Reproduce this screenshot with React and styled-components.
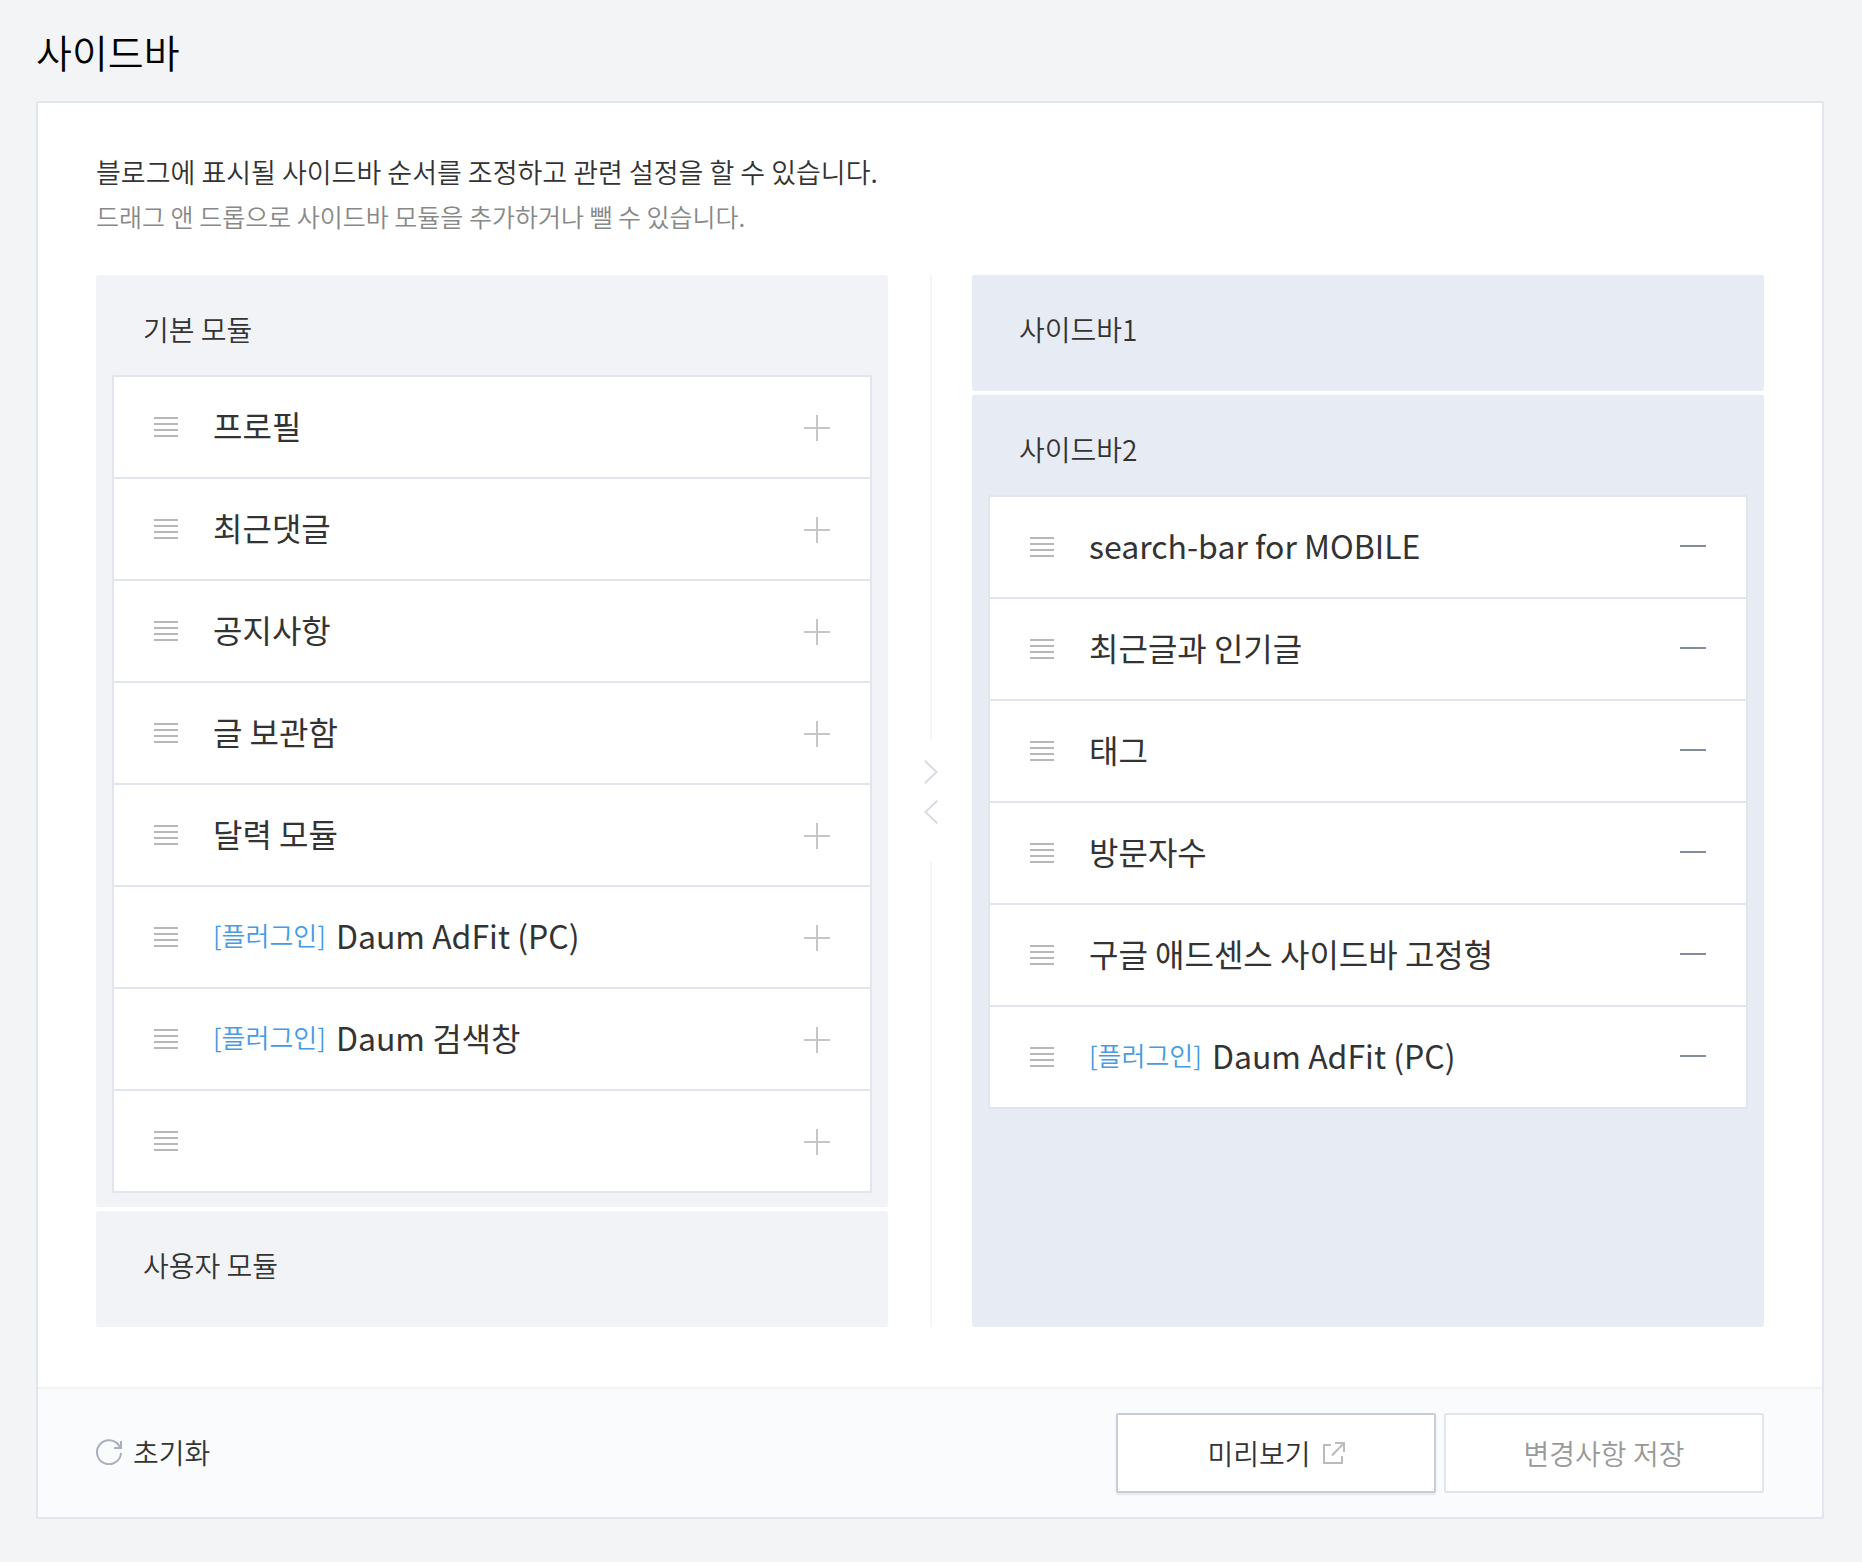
import styled, { createGlobalStyle } from 'styled-components';

const GlobalStyle = createGlobalStyle`
	*,
	*::before,
	*::after {
		box-sizing: border-box;
	}

	body {
		margin: 0;
		background: #f3f4f6;
		color: #333;
		font-family: 'Noto Sans CJK KR', 'Noto Sans', sans-serif;
		font-size: 28px;
		font-weight: 350;
		line-height: 44px;
	}

	h1,
	h2,
	p,
	ul {
		margin: 0;
		padding: 0;
	}

	button {
		padding: 0;
		border: 0;
		background: none;
		color: inherit;
		font: inherit;
		cursor: pointer;
	}

	svg {
		display: block;
		flex: none;
	}
`;

const basicModules = [
	{ id: 1, title: '프로필' },
	{ id: 2, title: '최근댓글' },
	{ id: 3, title: '공지사항' },
	{ id: 4, title: '글 보관함' },
	{ id: 5, title: '달력 모듈' },
	{ id: 6, title: 'Daum AdFit (PC)', plugin: true },
	{ id: 7, title: 'Daum 검색창', plugin: true },
	{ id: 8, title: '' },
];

const sidebarModules = [
	{ id: 11, title: 'search-bar for MOBILE' },
	{ id: 12, title: '최근글과 인기글' },
	{ id: 13, title: '태그' },
	{ id: 14, title: '방문자수' },
	{ id: 15, title: '구글 애드센스 사이드바 고정형' },
	{ id: 16, title: 'Daum AdFit (PC)', plugin: true },
];

const HandleIcon = () => (
	<svg width="24" height="20" viewBox="0 0 24 20" fill="#b8b8b8" aria-hidden="true">
		<path d="M0 0h24v2H0zM0 6h24v2H0zM0 12h24v2H0zM0 18h24v2H0z" />
	</svg>
);

const PlusIcon = () => (
	<svg width="26" height="28" viewBox="0 0 26 28" fill="#c6c6c6" aria-hidden="true">
		<path d="M12 2h2v12h12v2H14v12h-2V16H0v-2h12z" />
	</svg>
);

const MinusIcon = () => (
	<svg width="26" height="28" viewBox="0 0 26 28" fill="#848d9c" aria-hidden="true">
		<path d="M0 12h26v2H0z" />
	</svg>
);

const ArrowIcon = ({ left }) => (
	<svg
		width="14"
		height="24"
		viewBox="0 0 14 24"
		fill="none"
		stroke="#d8dde4"
		strokeWidth="2"
		aria-hidden="true"
	>
		<path d={left ? 'M13.3.7 1.4 12l11.9 11.3' : 'M.7.7 12.6 12 .7 23.3'} />
	</svg>
);

const ResetIcon = () => (
	<svg
		width="26"
		height="26"
		viewBox="0 0 26 26"
		fill="none"
		stroke="#a9afbd"
		strokeWidth="2"
		aria-hidden="true"
	>
		<path d="M25 14A12 12 0 1 1 22.8 6.2L24.4 8.6" />
		<path d="M25 2v7h-7" />
	</svg>
);

const ExternalIcon = () => (
	<svg
		width="22"
		height="22"
		viewBox="0 0 22 22"
		fill="none"
		stroke="#bcbcbc"
		strokeWidth="2"
		aria-hidden="true"
	>
		<path d="M8 3H1v18h18v-7" />
		<path d="M12 1h9v9M21 1 9 13.5" />
	</svg>
);

const Page = styled.main`
	padding: 0 38px 43px 36px;
`;

const PageTitle = styled.h1`
	padding: 21px 0 20px;
	color: #000;
	font-size: 39px;
	font-weight: 350;
	line-height: 60px;
`;

const Card = styled.section`
	border: 2px solid #e1e5ed;
	border-radius: 2px;
	background: #fff;
`;

const CardBody = styled.div`
	padding: 47px 58px 60px;
`;

const Description = styled.p`
	color: ${({ $muted }) => ($muted ? '#888' : '#333')};
	font-size: ${({ $muted }) => ($muted ? '25px' : '27px')};
`;

const Columns = styled.div`
	display: grid;
	grid-template-columns: 1fr 84px 1fr;
	margin-top: 37px;
`;

const Column = styled.div`
	display: flex;
	flex-direction: column;
	gap: 4px;
	min-width: 0;
`;

const Divider = styled.div`
	display: flex;
	flex-direction: column;
	align-items: center;
	padding-left: 2px;

	&::before,
	&::after {
		content: '';
		flex: 1;
		width: 2px;
		background: #f4f5f7;
	}
`;

const Arrows = styled.div`
	display: flex;
	flex-direction: column;
	gap: 16px;
	padding: 20px 0 38px;
`;

const GroupBox = styled.section`
	flex: ${({ $grow }) => ($grow ? 1 : 'none')};
	padding: 0 16px 14px;
	border-radius: 3px;
	background: ${({ $active }) => ($active ? '#e7ebf3' : '#f1f3f7')};
`;

const GroupTitle = styled.h2`
	padding: 32px 31px 24px;
	font-size: 28px;
	font-weight: 350;
	line-height: 44px;
`;

const ModuleList = styled.ul`
	min-height: 2px;
	list-style: none;
`;

const ModuleRow = styled.li`
	display: flex;
	align-items: center;
	height: 102px;
	padding: 0 40px;
	border: 2px solid #e1e5ee;
	border-bottom: 0;
	background: #fff;

	&:first-child {
		border-radius: 2px 2px 0 0;
	}

	&:last-child {
		height: 104px;
		border-bottom: 2px solid #e1e5ee;
		border-radius: 0 0 2px 2px;
	}
`;

const ModuleName = styled.div`
	display: flex;
	flex: 1;
	align-items: center;
	gap: 10px;
	min-width: 0;
	margin-left: 35px;
	padding-bottom: 4px;
	font-size: 32px;
	font-weight: 400;
`;

const PluginLabel = styled.span`
	color: #459be4;
	font-size: 26px;
	font-weight: 350;
`;

const CardFooter = styled.footer`
	display: flex;
	align-items: center;
	justify-content: space-between;
	padding: 24px 58px;
	border-top: 2px solid #f1f2f5;
	background: #fafbfd;
`;

const ResetButton = styled.button`
	display: flex;
	align-items: center;
	gap: 11px;
	padding-bottom: 2px;
`;

const Actions = styled.div`
	display: flex;
	gap: 8px;
`;

const ActionButton = styled.button`
	display: flex;
	align-items: center;
	justify-content: center;
	gap: 12px;
	width: 320px;
	height: 80px;
	border: 2px solid #c7cdd9;
	border-radius: 2px;
	background: #fff;
	box-shadow: 0 2px 2px rgba(0, 0, 0, 0.08);

	&:disabled {
		border-color: #e1e5ee;
		box-shadow: none;
		color: #999;
		cursor: default;
	}
`;

const Group = ({ title, modules = [], active, grow }) => {
	return (
		<GroupBox $active={active} $grow={grow}>
			<GroupTitle>{title}</GroupTitle>
			<ModuleList>
				{modules.map((module) => (
					<ModuleRow key={module.id}>
						<HandleIcon />
						<ModuleName>
							{module.plugin && <PluginLabel>[플러그인]</PluginLabel>}
							<span>{module.title}</span>
						</ModuleName>
						<button type="button" aria-label={active ? '제거' : '추가'}>
							{active ? <MinusIcon /> : <PlusIcon />}
						</button>
					</ModuleRow>
				))}
			</ModuleList>
		</GroupBox>
	);
};

const App = () => {
	return (
		<>
			<GlobalStyle />
			<Page>
				<PageTitle>사이드바</PageTitle>
				<Card>
					<CardBody>
						<Description>
							블로그에 표시될 사이드바 순서를 조정하고 관련 설정을 할 수 있습니다.
						</Description>
						<Description $muted>
							드래그 앤 드롭으로 사이드바 모듈을 추가하거나 뺄 수 있습니다.
						</Description>
						<Columns>
							<Column>
								<Group title="기본 모듈" modules={basicModules} />
								<Group title="사용자 모듈" />
							</Column>
							<Divider>
								<Arrows>
									<ArrowIcon />
									<ArrowIcon left />
								</Arrows>
							</Divider>
							<Column>
								<Group title="사이드바1" active />
								<Group title="사이드바2" modules={sidebarModules} active grow />
							</Column>
						</Columns>
					</CardBody>
					<CardFooter>
						<ResetButton type="button">
							<ResetIcon />
							초기화
						</ResetButton>
						<Actions>
							<ActionButton type="button">
								미리보기
								<ExternalIcon />
							</ActionButton>
							<ActionButton type="button" disabled>
								변경사항 저장
							</ActionButton>
						</Actions>
					</CardFooter>
				</Card>
			</Page>
		</>
	);
};

export default App;
